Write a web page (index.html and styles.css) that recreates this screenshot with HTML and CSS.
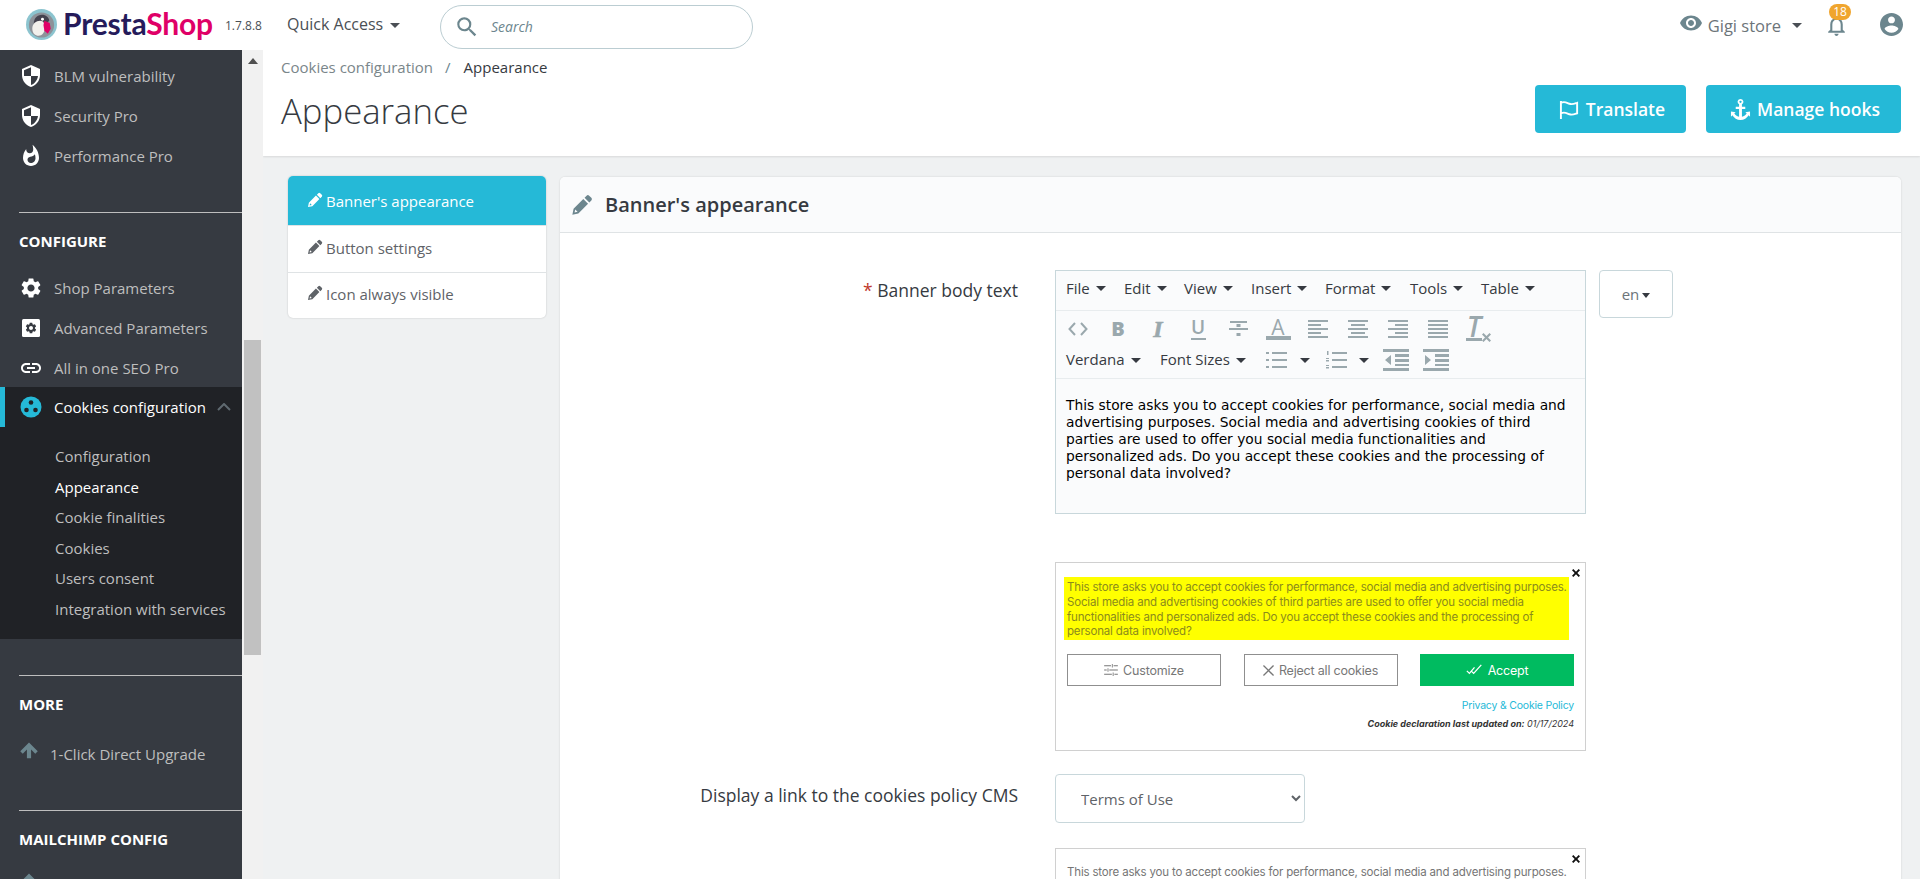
FILE: index.html
```html
<!DOCTYPE html>
<html lang="en">
<head>
<meta charset="utf-8">
<title>Appearance</title>
<link rel="stylesheet" href="styles.css">
</head>
<body>
<svg class="defs" aria-hidden="true">
  <symbol id="i-pencil" viewBox="0 0 24 24"><path d="M17 1.800a2 2 0 0 1 2.800 0l2.400 2.400a2 2 0 0 1 0 2.800l-2.200 2.200-5.200-5.200zM13.400 5.400l5.200 5.200L8 21.200 1.500 22.500 2.800 16zM4.600 16.800l-.7 3.300 3.300-.7z"/></symbol>
  <symbol id="i-shield" viewBox="0 0 24 24"><path d="M12 1L3 5v6c0 5.550 3.840 10.740 9 12 5.160-1.260 9-6.450 9-12V5l-9-4zm0 10.990h7c-.53 4.120-3.280 7.790-7 9.010V12H5V6.300l7-3.110v8.800z"/></symbol>
  <symbol id="i-gear" viewBox="0 0 24 24"><path d="M19.140 12.940c.04-.3.06-.61.06-.94 0-.32-.02-.64-.07-.94l2.030-1.580a.49.49 0 0 0 .12-.61l-1.920-3.320a.488.488 0 0 0-.59-.22l-2.390.96c-.5-.38-1.030-.7-1.620-.94l-.36-2.540a.484.484 0 0 0-.48-.41h-3.840c-.24 0-.43.17-.47.41l-.36 2.540c-.59.24-1.130.57-1.620.94l-2.390-.96c-.22-.08-.47 0-.59.22L2.740 8.870c-.12.21-.08.47.12.61l2.030 1.580c-.05.3-.09.63-.09.94s.02.64.07.94l-2.030 1.580a.49.49 0 0 0-.12.61l1.920 3.320c.12.22.37.29.59.22l2.390-.96c.5.38 1.030.7 1.620.94l.36 2.540c.05.24.24.41.48.41h3.840c.24 0 .44-.17.47-.41l.36-2.540c.59-.24 1.130-.56 1.620-.94l2.390.96c.22.08.47 0 .59-.22l1.920-3.320c.12-.22.07-.47-.12-.61l-2.010-1.580zM12 15.600c-1.980 0-3.600-1.620-3.600-3.600s1.620-3.600 3.600-3.600 3.600 1.620 3.600 3.600-1.620 3.600-3.600 3.600z"/></symbol>
  <symbol id="i-arrow" viewBox="0 0 24 24"><path d="M12 3L1.500 13.500l3 3 5-5V22h5V11.500l5 5 3-3z"/></symbol>
  <symbol id="i-sliders" viewBox="0 0 16 14"><path d="M0 1.500h8v1H0zM11 1.500h5v1h-5zM9 0h1v4H9zM0 6.500h3v1H0zM6 6.500h10v1H6zM4 5h1v4H4zM0 11.500h9v1H0zM12 11.500h4v1h-4zM10 10h1v4h-1z"/></symbol>
  <symbol id="i-check2" viewBox="0 0 20 14"><path d="M1 8l3 3 6-7M6 8l3 3L18 1" fill="none" stroke="currentColor" stroke-width="1.500"/></symbol>
  <symbol id="i-x" viewBox="0 0 12 12"><path d="M1 0l5 5 5-5 1 1-5 5 5 5-1 1-5-5-5 5-1-1 5-5-5-5z"/></symbol>
  <symbol id="i-xbold" viewBox="0 0 12 12"><path d="M2 0l4 4 4-4 2 2-4 4 4 4-2 2-4-4-4 4-2-2 4-4-4-4z"/></symbol>
  <symbol id="i-code" viewBox="0 0 20 14"><path d="M7 1L1.500 7 7 13M13 1l5.500 6L13 13" fill="none" stroke="currentColor" stroke-width="2"/></symbol>
  <symbol id="i-strike" viewBox="0 0 19 18"><path d="M1 1h17v2H1zM0 8h19v2H0zM7.500 4h4v3h-4zM7.500 13h4v3h-4z"/></symbol>
  <symbol id="i-aleft" viewBox="0 0 20 18"><path d="M0 0h20v2H0zM0 4h13v2H0zM0 8h20v2H0zM0 12h13v2H0zM0 16h20v2H0z"/></symbol>
  <symbol id="i-acenter" viewBox="0 0 20 18"><path d="M0 0h20v2H0zM3 4h14v2H3zM0 8h20v2H0zM3 12h14v2H3zM0 16h20v2H0z"/></symbol>
  <symbol id="i-aright" viewBox="0 0 20 18"><path d="M0 0h20v2H0zM7 4h13v2H7zM0 8h20v2H0zM7 12h13v2H7zM0 16h20v2H0z"/></symbol>
  <symbol id="i-ajust" viewBox="0 0 20 18"><path d="M0 0h20v2H0zM0 4h20v2H0zM0 8h20v2H0zM0 12h20v2H0zM0 16h20v2H0z"/></symbol>
  <symbol id="i-ul" viewBox="0 0 21 18"><path d="M6 1h15v2H6zM6 8h15v2H6zM6 15h15v2H6zM0 1h3v2H0zM0 8h3v2H0zM0 15h3v2H0z"/></symbol>
  <symbol id="i-ol" viewBox="0 0 21 18"><path d="M6 1h15v2H6zM6 8h15v2H6zM6 15h15v2H6zM1 0h1.500v4H1zM0 7h3v1H0zM0 9h3v1.500H0zM0 14h3v1H0zM0 16h3v1.500H0z"/></symbol>
  <symbol id="i-outdent" viewBox="0 0 26 22"><path d="M0 0h26v3H0zM12 5h14v3H12zM12 10h14v3H12zM12 15h14v2H12zM0 19h26v3H0zM8 6v10l-6-5z"/></symbol>
  <symbol id="i-indent" viewBox="0 0 26 22"><path d="M0 0h26v3H0zM12 5h14v3H12zM12 10h14v3H12zM12 15h14v2H12zM0 19h26v3H0zM2 6v10l6-5z"/></symbol>
</svg>

<header class="topbar">
  <a class="logo">
    <svg class="logo-mark" viewBox="0 0 32 32"><circle cx="16" cy="16" r="16" fill="#8cc4cf"/><circle cx="16" cy="16.500" r="13" fill="#8d9299"/><path d="M8 15c0-5 3.500-9 8.500-9 4 0 7 2.500 7.500 6l-3 3H12z" fill="#44424f"/><path d="M6.500 20c0-5 4-8 8-8 3.500 0 5 3 5 7 0 5-3 8.500-6.500 8.500S6.500 25 6.500 20z" fill="#f2f0ec"/><path d="M19 12l5.500 2.500 1 6-3 5-3.500-3-1-6z" fill="#df0067"/><circle cx="17" cy="10.500" r="1.500" fill="#fff"/></svg>
    <span class="logo-text"><span class="logo-a">Presta</span><span class="logo-b">Shop</span></span>
  </a>
  <span class="version">1.7.8.8</span>
  <span class="quick">Quick Access<i class="caret caret-quick"></i></span>
  <div class="search">
    <svg class="search-icon" viewBox="0 0 24 24"><path d="M15.500 14h-.79l-.28-.27A6.471 6.471 0 0 0 16 9.500 6.500 6.500 0 1 0 9.500 16c1.610 0 3.090-.59 4.230-1.570l.27.28v.79l5 4.990L20.490 19l-4.990-5zm-6 0C7.010 14 5 11.990 5 9.500S7.010 5 9.500 5 14 7.010 14 9.500 11.990 14 9.500 14z"/></svg>
    <span class="search-text">Search</span>
  </div>
  <div class="top-right">
    <svg class="eye" viewBox="0 0 24 24"><path d="M12 4.500C7 4.500 2.730 7.610 1 12c1.730 4.390 6 7.500 11 7.500s9.270-3.110 11-7.500c-1.730-4.390-6-7.500-11-7.500zM12 17c-2.760 0-5-2.240-5-5s2.240-5 5-5 5 2.240 5 5-2.240 5-5 5zm0-8c-1.660 0-3 1.340-3 3s1.340 3 3 3 3-1.340 3-3-1.340-3-3-3z"/></svg>
    <span class="shop">Gigi store</span>
    <i class="caret caret-shop"></i>
    <span class="bell">
      <svg viewBox="0 0 24 24"><path d="M12 22c1.100 0 2-.9 2-2h-4c0 1.100.9 2 2 2zm6-6v-5c0-3.070-1.630-5.640-4.500-6.320V4c0-.83-.67-1.500-1.500-1.500s-1.500.67-1.500 1.500v.68C7.640 5.360 6 7.920 6 11v5l-2 2v1h16v-1l-2-2zm-2 1H8v-6c0-2.480 1.510-4.500 4-4.500s4 2.020 4 4.500v6z"/></svg>
      <span class="badge">18</span>
    </span>
    <svg class="avatar" viewBox="2 2 20 20"><path d="M12 2C6.480 2 2 6.480 2 12s4.480 10 10 10 10-4.480 10-10S17.520 2 12 2zm0 3c1.660 0 3 1.340 3 3s-1.340 3-3 3-3-1.340-3-3 1.340-3 3-3zm0 14.200c-2.500 0-4.710-1.280-6-3.220.03-1.990 4-3.080 6-3.080 1.990 0 5.970 1.090 6 3.080-1.290 1.940-3.500 3.220-6 3.220z"/></svg>
  </div>
</header>

<div class="shell">
  <nav class="sidebar">
    <a class="nav-item"><svg class="nav-icon"><use href="#i-shield"/></svg>BLM vulnerability</a>
    <a class="nav-item"><svg class="nav-icon"><use href="#i-shield"/></svg>Security Pro</a>
    <a class="nav-item"><svg class="nav-icon" viewBox="0 0 24 24"><path d="M13.500.67s.74 2.650.74 4.800c0 2.060-1.350 3.730-3.410 3.730-2.070 0-3.630-1.670-3.630-3.730l.03-.36C5.210 7.510 4 10.620 4 14c0 4.420 3.580 8 8 8s8-3.580 8-8C20 8.610 17.410 3.800 13.500.67zM11.710 19c-1.780 0-3.220-1.400-3.220-3.140 0-1.620 1.050-2.760 2.810-3.120 1.770-.36 3.600-1.210 4.620-2.580.39 1.290.59 2.650.59 4.040 0 2.650-2.150 4.800-4.800 4.800z"/></svg>Performance Pro</a>

    <div class="nav-section nav-section-configure">CONFIGURE</div>
    <a class="nav-item"><svg class="nav-icon"><use href="#i-gear"/></svg>Shop Parameters</a>
    <a class="nav-item"><svg class="nav-icon" viewBox="0 0 24 24"><rect x="3" y="3" width="18" height="18" rx="1.500"/><g transform="translate(5.400 5.400) scale(.55)"><use href="#i-gear" width="24" height="24" class="gear-dark"/></g></svg>Advanced Parameters</a>
    <a class="nav-item"><svg class="nav-icon" viewBox="0 0 24 24"><path d="M3.900 12c0-1.710 1.390-3.100 3.100-3.100h4V7H7c-2.760 0-5 2.240-5 5s2.240 5 5 5h4v-1.900H7c-1.710 0-3.100-1.390-3.100-3.100zM8 13h8v-2H8v2zm9-6h-4v1.900h4c1.710 0 3.100 1.390 3.100 3.100s-1.390 3.100-3.100 3.100h-4V17h4c2.760 0 5-2.240 5-5s-2.240-5-5-5z"/></svg>All in one SEO Pro</a>

    <div class="nav-open">
      <a class="nav-item nav-item-active">
        <svg class="nav-icon nav-icon-cookie" viewBox="0 0 24 24"><circle cx="12" cy="12" r="10.500"/><circle cx="12" cy="7.500" r="2.300" class="dot"/><circle cx="7.500" cy="15" r="2.300" class="dot"/><circle cx="16.500" cy="15" r="2.300" class="dot"/></svg>
        Cookies configuration
        <svg class="chev" viewBox="0 0 14 8"><path d="M1 7l6-6 6 6" fill="none" stroke="#5f6a70" stroke-width="2"/></svg>
      </a>
      <ul class="subnav">
        <li>Configuration</li>
        <li class="sub-current">Appearance</li>
        <li>Cookie finalities</li>
        <li>Cookies</li>
        <li>Users consent</li>
        <li>Integration with services</li>
      </ul>
    </div>

    <div class="nav-section nav-section-more">MORE</div>
    <a class="nav-item nav-item-upgrade"><svg class="nav-icon nav-icon-up"><use href="#i-arrow"/></svg>1-Click Direct Upgrade</a>
    <div class="nav-section nav-section-mail">MAILCHIMP CONFIG</div>
    <a class="nav-item"><svg class="nav-icon nav-icon-up"><use href="#i-arrow"/></svg></a>
  </nav>

  <div class="scrolltrack">
    <i class="scroll-up"></i>
    <i class="scroll-thumb"></i>
  </div>

  <main class="content">
    <section class="page-head">
      <div class="head-left">
        <div class="crumbs"><span class="crumb-link">Cookies configuration</span><span class="crumb-sep">/</span><span class="crumb-now">Appearance</span></div>
        <h1 class="page-title">Appearance</h1>
      </div>
      <div class="head-actions">
        <a class="btn btn-translate">
          <svg class="btn-icon" viewBox="0 0 22 22"><path d="M2 2v19M2 4c4-2 6 0 9 1 3 1 5 0 8-1v11c-3 1-5 2-8 1-3-1-5-3-9-1" fill="none" stroke="#fff" stroke-width="2"/></svg>Translate
        </a>
        <a class="btn btn-hooks">
          <svg class="btn-icon" viewBox="0 0 22 22"><path d="M11 0a3 3 0 0 1 1.500 5.600V8H16v2.500h-3.500v8a6 6 0 0 0 5-3.500L16 14l5-1v5.500L19.500 17c-1.500 2.800-5 5-8.500 5s-7-2.200-8.500-5L1 18.500V13l5 1-1.500 1a6 6 0 0 0 5 3.500v-8H6V8h3.500V5.600A3 3 0 0 1 11 0zm0 1.800a1.200 1.200 0 1 0 0 2.400 1.200 1.200 0 0 0 0-2.400z" fill="#fff"/></svg>Manage hooks
        </a>
      </div>
    </section>

    <div class="workspace">
      <aside class="tabs">
        <a class="tab tab-active"><svg class="tab-icon"><use href="#i-pencil"/></svg>Banner's appearance</a>
        <a class="tab"><svg class="tab-icon"><use href="#i-pencil"/></svg>Button settings</a>
        <a class="tab"><svg class="tab-icon"><use href="#i-pencil"/></svg>Icon always visible</a>
      </aside>

      <section class="panel">
        <h2 class="panel-head"><svg class="panel-icon"><use href="#i-pencil"/></svg>Banner's appearance</h2>
        <div class="form">
          <label class="form-label form-label-body"><span class="req">*</span> Banner body text</label>
          <div class="form-field form-field-editor">
            <div class="editor">
              <div class="menu-row">
                <span class="mi mi-file">File<i class="caret"></i></span>
                <span class="mi mi-edit">Edit<i class="caret"></i></span>
                <span class="mi mi-view">View<i class="caret"></i></span>
                <span class="mi mi-insert">Insert<i class="caret"></i></span>
                <span class="mi mi-format">Format<i class="caret"></i></span>
                <span class="mi mi-tools">Tools<i class="caret"></i></span>
                <span class="mi">Table<i class="caret"></i></span>
              </div>
              <div class="tool-rows">
                <div class="tool-row">
                  <span class="tb"><svg class="tb-code"><use href="#i-code"/></svg></span>
                  <span class="tb tb-b">B</span>
                  <span class="tb tb-i">I</span>
                  <span class="tb"><span class="tb-u">U</span></span>
                  <span class="tb"><svg class="tb-strike"><use href="#i-strike"/></svg></span>
                  <span class="tb"><span class="tb-a">A</span></span>
                  <span class="tb"><svg class="tb-svg"><use href="#i-aleft"/></svg></span>
                  <span class="tb"><svg class="tb-svg"><use href="#i-acenter"/></svg></span>
                  <span class="tb"><svg class="tb-svg"><use href="#i-aright"/></svg></span>
                  <span class="tb"><svg class="tb-svg"><use href="#i-ajust"/></svg></span>
                  <span class="tb"><span class="tb-clear">T</span><svg class="tb-clear-x"><use href="#i-xbold"/></svg></span>
                </div>
                <div class="tool-row tool-row-two">
                  <span class="mi mi-font">Verdana<i class="caret"></i></span>
                  <span class="mi mi-size">Font Sizes<i class="caret"></i></span>
                  <svg class="list-svg"><use href="#i-ul"/></svg><i class="caret caret-ul"></i>
                  <svg class="list-svg list-ol"><use href="#i-ol"/></svg><i class="caret caret-ol"></i>
                  <svg class="dent-svg dent-out"><use href="#i-outdent"/></svg>
                  <svg class="dent-svg"><use href="#i-indent"/></svg>
                </div>
              </div>
              <div class="editor-body">This store asks you to accept cookies for performance, social media and advertising purposes. Social media and advertising cookies of third parties are used to offer you social media functionalities and personalized ads. Do you accept these cookies and the processing of personal data involved?</div>
            </div>
            <button class="lang">en<i class="caret caret-lang"></i></button>
          </div>

          <span class="form-gap"></span>
          <div class="preview">
            <svg class="preview-x"><use href="#i-xbold"/></svg>
            <p class="preview-text preview-text-hl">This store asks you to accept cookies for performance, social media and advertising purposes. Social media and advertising cookies of third parties are used to offer you social media functionalities and personalized ads. Do you accept these cookies and the processing of personal data involved?</p>
            <div class="pv-buttons">
              <span class="pv-btn"><svg class="pv-ic"><use href="#i-sliders"/></svg>Customize</span>
              <span class="pv-btn"><svg class="pv-ic pv-ic-x"><use href="#i-x"/></svg>Reject all cookies</span>
              <span class="pv-btn pv-btn-ok"><svg class="pv-ic pv-ic-check"><use href="#i-check2"/></svg>Accept</span>
            </div>
            <div class="pv-link">Privacy &amp; Cookie Policy</div>
            <div class="pv-date"><b>Cookie declaration last updated on:</b> 01/17/2024</div>
          </div>

          <label class="form-label form-label-cms">Display a link to the cookies policy CMS</label>
          <div class="form-field form-field-select">
            <select class="select"><option>Terms of Use</option></select>
          </div>

          <span class="form-gap"></span>
          <div class="preview preview-second">
            <svg class="preview-x"><use href="#i-xbold"/></svg>
            <p class="preview-text preview-text-plain">This store asks you to accept cookies for performance, social media and advertising purposes.</p>
          </div>
        </div>
      </section>
    </div>
  </main>
</div>
</body>
</html>
```

FILE: styles.css
```css
* { box-sizing: border-box; }
html, body { margin: 0; height: 100%; }
body {
  display: flex;
  flex-direction: column;
  height: 879px;
  overflow: hidden;
  background: #eff1f2;
  color: #363a41;
  font-family: "Open Sans", sans-serif;
  font-size: 15px;
}
.defs { display: none; }
svg { fill: currentColor; }

/* carets */
.caret {
  display: inline-block;
  width: 0;
  height: 0;
  margin-left: 6px;
  border-left: 5px solid transparent;
  border-right: 5px solid transparent;
  border-top: 5px solid #363a41;
  vertical-align: middle;
}
.caret-quick { border-top-color: #4a4f55; margin-left: 7px; }
.caret-shop { margin-left: 11px; border-top-color: #4a4f55; }
.caret-lang { margin-left: 3px; border-left-width: 4.500px; border-right-width: 4.500px; }
.caret-ul { margin-left: 13px; }
.caret-ol { margin-left: 12px; }

/* top bar */
.topbar {
  display: flex;
  align-items: center;
  flex: 0 0 50px;
  height: 50px;
  background: #fff;
  padding-left: 26px;
  padding-right: 17px;
}
.logo { display: flex; align-items: center; gap: 6px; width: 199px; }
.logo-mark { width: 31px; height: 31px; flex: none; margin-top: -2px; }
.logo-text { font-family: "Lato", sans-serif; font-weight: 700; font-size: 30px; letter-spacing: -.2px; margin-top: -4px; }
.logo-a { color: #251b5b; }
.logo-b { color: #df0067; }
.version { font-size: 12px; color: #4a4f55; width: 62px; margin-top: 1px; }
.quick { font-size: 16px; color: #4a4f55; width: 153px; margin-top: -3px; }
.search {
  display: flex;
  align-items: center;
  width: 313px;
  height: 44px;
  margin-top: 3px;
  border: 1px solid #bbcdd2;
  border-radius: 22px;
  padding-left: 13px;
  background: #fff;
}
.search-icon { width: 26px; height: 26px; color: #6c868e; }
.search-text { margin-left: 11px; font-style: italic; font-size: 14px; color: #6c868e; }
.top-right { display: flex; align-items: center; margin-left: auto; color: #6c868e; }
.eye { width: 24px; height: 24px; margin-top: -4px; }
.shop { font-size: 16.500px; color: #6c7479; margin-left: 5px; }
.bell { position: relative; display: block; width: 25px; height: 25px; margin-left: 22px; margin-right: 31px; }
.bell svg { width: 25px; height: 25px; }
.badge {
  position: absolute;
  top: -9px;
  left: 5px;
  width: 22px;
  height: 16px;
  border-radius: 8px;
  background: #f0a52e;
  color: #fff;
  font-size: 12px;
  line-height: 16px;
  text-align: center;
}
.avatar { width: 23px; height: 23px; margin-top: -2px; }

/* shell */
.shell { display: flex; flex: 1; min-height: 0; }
.sidebar {
  flex: 0 0 242px;
  background: #363a41;
  color: #bebebe;
  overflow: hidden;
  padding-top: 6px;
  font-size: 15px;
}
.nav-item {
  display: flex;
  align-items: center;
  height: 40px;
  padding-left: 19px;
  color: #bebebe;
  position: relative;
}
.nav-icon { width: 24px; height: 24px; flex: none; margin-right: 11px; color: #fff; }
.gear-dark { color: #363a41; }
.nav-section {
  margin-left: 19px;
  border-top: 1px solid #bebebe;
  color: #fff;
  font-weight: 700;
  font-size: 15px;
}
.nav-section-configure { margin-top: 36px; padding-top: 19px; padding-bottom: 17px; line-height: 19px; }
.nav-section-more { margin-top: 36px; padding-top: 19px; padding-bottom: 20px; line-height: 19px; }
.nav-section-mail { margin-top: 36px; padding-top: 19px; padding-bottom: 16px; line-height: 19px; }
.nav-open { background: #202226; padding-bottom: 15px; margin-top: -1px; }
.nav-item-active { color: #fff; border-left: 5px solid #25b9d7; padding-left: 14px; }
.nav-icon-cookie { color: #25b9d7; }
.dot { fill: #202226; }
.chev { width: 14px; height: 8px; margin-left: 11px; }
.subnav { list-style: none; margin: 0; padding: 14px 0 0 55px; }
.subnav li { height: 30.500px; line-height: 30px; }
.sub-current { color: #fff; }
.nav-icon-up { color: #6c868e; width: 20px; height: 20px; margin-top: -8px; margin-right: 11px; }

/* scroll track */
.scrolltrack { flex: 0 0 21px; background: #f1f1f1; padding-left: 2px; }
.scroll-up {
  display: block;
  width: 0; height: 0;
  margin: 8px 0 0 4px;
  border-left: 5px solid transparent;
  border-right: 5px solid transparent;
  border-bottom: 6px solid #505050;
}
.scroll-thumb { display: block; width: 17px; height: 315px; margin-top: 276px; background: #c1c1c1; }

/* content */
.content { flex: 1; min-width: 0; overflow: hidden; }
.page-head {
  display: flex;
  justify-content: space-between;
  height: 106px;
  background: #fff;
  box-shadow: 0 1px 2px rgba(0,0,0,.1);
  padding: 8px 19px 0 18px;
}
.crumbs { font-size: 15px; line-height: 19px; }
.crumb-link { color: #7a868a; }
.crumb-sep { margin: 0 13px 0 12px; color: #6c868e; }
.crumb-now { color: #363a41; }
.page-title { margin: 10px 0 0; font-size: 34.700px; line-height: 48px; font-weight: 300; color: #363a41; }
.head-actions { display: flex; gap: 20px; padding-top: 27px; }
.btn {
  display: flex;
  align-items: center;
  justify-content: center;
  height: 48px;
  padding-left: 3px;
  border-radius: 4px;
  background: #25b9d7;
  color: #fff;
  font-size: 17.500px;
  font-weight: 600;
  gap: 6px;
}
.btn-translate { width: 151px; }
.btn-hooks { width: 195px; }
.btn-icon { width: 21px; height: 21px; }

.workspace { display: flex; align-items: flex-start; gap: 14px; padding: 20px 0 0 25px; }
.tabs {
  flex: 0 0 258px;
  background: #fff;
  border-radius: 5px;
  box-shadow: 0 0 2px rgba(0,0,0,.2);
  overflow: hidden;
}
.tab {
  display: flex;
  align-items: center;
  height: 46.500px;
  padding: 0 0 2px 19px;
  color: #5f6368;
  border-top: 1px solid #dfe3e5;
}
.tab:first-child { border-top: 0; }
.tab-active { height: 49px; background: #25b9d7; color: #fff; padding-bottom: 0; }
.tab-icon { width: 16px; height: 16px; margin-right: 3px; margin-top: -2px; }

.panel {
  flex: 0 0 1341px;
  background: #fff;
  border-radius: 5px 5px 0 0;
  box-shadow: 0 0 2px rgba(0,0,0,.15);
  margin-top: 1px;
}
.panel-head {
  display: flex;
  align-items: center;
  height: 56px;
  margin: 0;
  padding-left: 11px;
  background: #fafbfc;
  border-bottom: 1px solid #dfe3e5;
  border-radius: 5px 5px 0 0;
  font-size: 20px;
  font-weight: 600;
  color: #363a41;
}
.panel-icon { width: 22px; height: 22px; margin-right: 12px; color: #6c868e; }

.form {
  display: grid;
  grid-template-columns: 458px 1fr;
  column-gap: 37px;
  padding-top: 37px;
}
.form-label { text-align: right; font-size: 17.500px; color: #363a41; line-height: 22px; }
.req { color: #c0392b; }
.form-label-body { padding-top: 9px; }
.form-label-cms { padding-top: 10px; margin-top: 23px; }
.form-field-editor { display: flex; align-items: flex-start; gap: 13px; }
.form-field-select { margin-top: 23px; }

.editor { width: 531px; height: 244px; border: 1px solid #c8d7db; background: #fafbfc; }
.menu-row {
  display: flex;
  align-items: center;
  height: 40px;
  padding: 0 0 6px 10px;
  border-bottom: 1px solid #e8ecee;
  font-size: 15px;
  color: #363a41;
}
.mi { white-space: nowrap; }
.mi .caret { margin-left: 6px; margin-top: -1px; }
.mi-file { width: 58px; }
.mi-edit { width: 60px; }
.mi-view { width: 67px; }
.mi-insert { width: 74px; }
.mi-format { width: 85px; }
.mi-tools { width: 71px; }
.tool-rows { height: 68px; border-bottom: 1px solid #e8ecee; }
.tool-row { display: flex; align-items: center; height: 34px; padding: 2px 0 0 2px; }
.tool-row-two { height: 30px; padding: 0 0 0 10px; font-size: 15px; }
.mi-font, .mi-size { margin-top: -2px; }
.tb {
  display: flex;
  align-items: center;
  justify-content: center;
  width: 40px;
  height: 30px;
  color: #9aa8ad;
  font-size: 20px;
  line-height: 20px;
}
.tb-code { width: 20px; height: 14px; }
.tb-b { font-weight: 800; }
.tb-i { font-family: "Liberation Serif", serif; font-weight: 700; font-style: italic; font-size: 24px; -webkit-text-stroke: .6px #9aa8ad; }
.tb-u { display: block; width: 15px; height: 22px; border-bottom: 2px solid #9aa8ad; font-weight: 600; text-align: center; font-size: 19px; line-height: 19px; }
.tb-strike { width: 19px; height: 18px; }
.tb-a { display: block; width: 25px; height: 22px; border-bottom: 4px solid #9aa8ad; text-align: center; font-size: 21px; line-height: 18px; }
.tb-clear { display: block; width: 16px; height: 26px; margin: -2px 0 0 -2px; border-bottom: 3px solid #9aa8ad; font-style: italic; font-size: 28px; font-weight: 600; line-height: 22px; text-align: center; }
.tb-clear-x { width: 9px; height: 9px; margin: 16px -3px 0 0; }
.tb-svg { width: 20px; height: 18px; }
.mi-font { width: 94px; }
.mi-size { width: 106px; }
.list-svg { width: 21px; height: 18px; color: #9aa8ad; flex: none; }
.list-ol { margin-left: 16px; }
.dent-svg { width: 26px; height: 22px; color: #9aa8ad; flex: none; margin-left: 14px; }
.editor-body {
  padding: 18px 12px 0 10px;
  font-family: "DejaVu Sans", Verdana, sans-serif;
  font-size: 13.800px;
  line-height: 17px;
  color: #000;
}
.lang {
  width: 74px;
  height: 48px;
  padding: 0;
  border: 1px solid #c8d7db;
  border-radius: 4px;
  background: #fff;
  color: #6c7479;
  font: 15px "Open Sans", sans-serif;
}

.preview {
  position: relative;
  width: 531px;
  height: 189px;
  margin-top: 48px;
  border: 1px solid #d0d0d0;
  background: #fff;
  padding: 14px 8px 0 8px;
  font-family: "Inter", sans-serif;
}
.preview-second { margin-top: 25px; height: 180px; padding-top: 16px; }
.preview-x { position: absolute; top: 6px; right: 5px; width: 8px; height: 8px; color: #111; }
.preview-text {
  width: 505px;
  margin: 0;
  padding: 3px 0 1px 3px;
  font-size: 11.500px;
  line-height: 14.750px;
  letter-spacing: -.17px;
  color: #757575;
}
.preview-text-plain { padding-top: 0; padding-bottom: 0; }
.preview-text-hl { background: #ffff00; color: #8b8b1c; }
.pv-buttons { display: flex; justify-content: space-between; padding: 14px 3px 0; width: 513px; }
.pv-btn {
  display: flex;
  align-items: center;
  justify-content: center;
  gap: 5px;
  width: 154px;
  height: 32px;
  border: 1px solid #8f8f8f;
  color: #777;
  font-size: 12.500px;
  letter-spacing: -.2px;
}
.pv-btn-ok { background: #00bb60; border-color: #00bb60; color: #fff; }
.pv-ic { width: 14px; height: 12px; }
.pv-ic-x { width: 11px; height: 11px; }
.pv-ic-check { width: 17px; height: 12px; }
.pv-link { width: 510px; margin-top: 13px; text-align: right; font-size: 10.500px; letter-spacing: -.2px; color: #25b9d7; }
.pv-date { width: 510px; margin-top: 6px; text-align: right; font-size: 9px; font-style: italic; color: #333; }

.select {
  display: block;
  width: 250px;
  height: 49px;
  padding: 0 8px 0 21px;
  border: 1px solid #c8d7db;
  border-radius: 4px;
  background: #fff;
  color: #5f6368;
  font: 15px "Open Sans", sans-serif;
}
```
